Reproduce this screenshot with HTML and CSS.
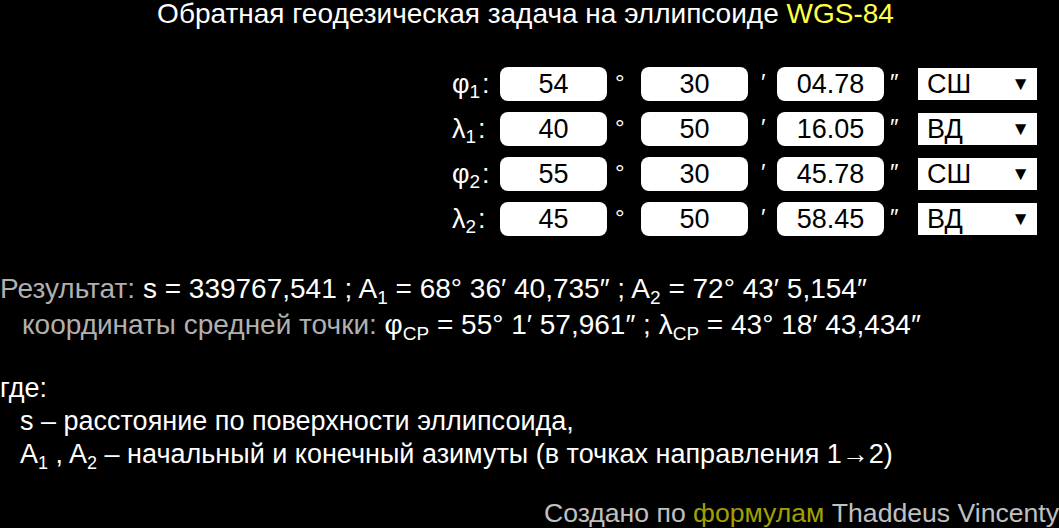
FILE: index.html
```html
<!DOCTYPE html>
<html lang="ru">
<head>
<meta charset="utf-8">
<title>Обратная геодезическая задача</title>
<link rel="stylesheet" href="styles.css">
</head>
<body>
<div class="page">
  <h1 class="title">Обратная геодезическая задача на эллипсоиде <span class="hl">WGS-84</span></h1>

  <div class="form">
    <div class="row">
      <span class="lbl">φ<sub>1</sub>:</span>
      <span class="inp">54</span><span class="unit u1">°</span>
      <span class="inp">30</span><span class="unit u2">′</span>
      <span class="inp">04.78</span><span class="unit u3">″</span>
      <span class="sel"><span>СШ</span><span class="arr">▼</span></span>
    </div>
    <div class="row">
      <span class="lbl">λ<sub>1</sub>:</span>
      <span class="inp">40</span><span class="unit u1">°</span>
      <span class="inp">50</span><span class="unit u2">′</span>
      <span class="inp">16.05</span><span class="unit u3">″</span>
      <span class="sel"><span>ВД</span><span class="arr">▼</span></span>
    </div>
    <div class="row">
      <span class="lbl">φ<sub>2</sub>:</span>
      <span class="inp">55</span><span class="unit u1">°</span>
      <span class="inp">30</span><span class="unit u2">′</span>
      <span class="inp">45.78</span><span class="unit u3">″</span>
      <span class="sel"><span>СШ</span><span class="arr">▼</span></span>
    </div>
    <div class="row">
      <span class="lbl">λ<sub>2</sub>:</span>
      <span class="inp">45</span><span class="unit u1">°</span>
      <span class="inp">50</span><span class="unit u2">′</span>
      <span class="inp">58.45</span><span class="unit u3">″</span>
      <span class="sel"><span>ВД</span><span class="arr">▼</span></span>
    </div>
  </div>

  <div class="result">
    <p class="line"><span class="gray">Результат:</span> s = 339767,541 ; A<sub>1</sub> = 68° 36′ 40,735″ ; A<sub>2</sub> = 72° 43′ 5,154″</p>
    <p class="line ind"><span class="gray">координаты средней точки:</span> φ<sub>СР</sub> = 55° 1′ 57,961″ ; λ<sub>СР</sub> = 43° 18′ 43,434″</p>
  </div>

  <div class="legend">
    <p class="line">где:</p>
    <p class="line ind2">s – расстояние по поверхности эллипсоида,</p>
    <p class="line ind2">A<sub>1</sub> , A<sub>2</sub> – начальный и конечный азимуты (в точках направления 1→2)</p>
  </div>

  <p class="footer">Создано по <span class="olive">формулам</span> Thaddeus Vincenty</p>
</div>
</body>
</html>
```

FILE: styles.css
```css
html, body {
  margin: 0;
  padding: 0;
  background: #000;
}
body {
  font-family: "Liberation Sans", Arial, sans-serif;
  color: #fff;
  overflow: hidden;
}
.page {
  width: 1059px;
  height: 528px;
  display: flex;
  flex-direction: column;
}
.title {
  margin: 0;
  font-size: 28px;
  font-weight: normal;
  line-height: 28px;
  text-align: center;
  padding-right: 8px;
  white-space: nowrap;
}
.hl { color: #ffff44; }
.form {
  margin-top: 39px;
  margin-left: 446px;
  display: flex;
  flex-direction: column;
  gap: 11px;
}
.row {
  display: flex;
  align-items: center;
  height: 34px;
}
.lbl {
  width: 54px;
  font-size: 27px;
  text-align: left;
  padding-left: 6px;
  box-sizing: border-box;
  white-space: nowrap;
}
.lbl sub { font-size: 19px; vertical-align: -5px; line-height: 0; margin-right: 2px; }
.inp {
  width: 107px;
  height: 34px;
  background: #fff;
  color: #000;
  border-radius: 8px;
  font-size: 27px;
  line-height: 35px;
  text-align: center;
}
.unit {
  font-size: 24px;
  text-align: left;
  align-self: flex-start;
  line-height: 32px;
  box-sizing: border-box;
}
.u1 { width: 34px; padding-left: 8px; }
.u2 { width: 29px; padding-left: 13px; }
.u3 { width: 34px; padding-left: 6px; }
.sel {
  width: 119px;
  height: 32px;
  background: #fff;
  color: #000;
  display: flex;
  align-items: center;
  justify-content: space-between;
  padding: 0 7px 0 9px;
  box-sizing: border-box;
  font-size: 27px;
}
.arr { font-size: 19px; }
.result { margin-top: 35px; }
.line {
  margin: 0;
  font-size: 28px;
  line-height: 36px;
  white-space: nowrap;
}
.line sub { font-size: 19px; vertical-align: -6px; line-height: 0; }
.gray { color: #b0b0b0; }
.ind { padding-left: 22px; }
.legend { margin-top: 29px; }
.legend .line { font-size: 27px; line-height: 33px; }
.legend .line sub { font-size: 18px; }
.ind2 { padding-left: 20px; }
.footer {
  margin: auto 0 0 0;
  text-align: right;
  font-size: 26.6px;
  line-height: 30px;
  color: #c0c0c0;
  white-space: nowrap;
}
.olive { color: #a0a000; }
```
